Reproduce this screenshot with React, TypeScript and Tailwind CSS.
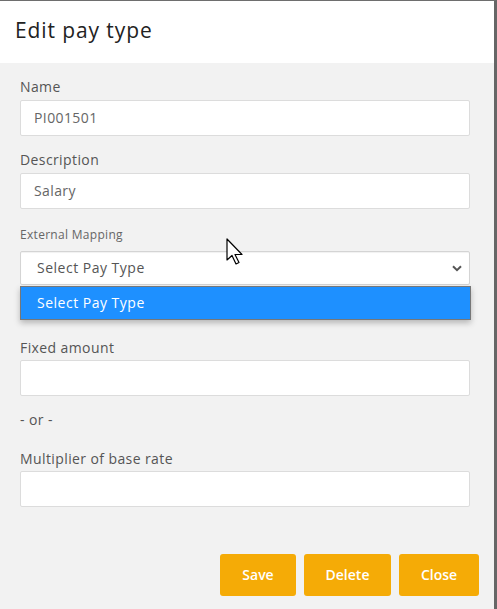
import React from "react";

const font = { fontFamily: "'Open Sans', 'Noto Sans', sans-serif" };

function Label({ children, className = "" }: { children: React.ReactNode; className?: string }) {
  return <div className={"text-[14px] leading-[20px] tracking-[0.4px] text-[#555] " + className}>{children}</div>;
}

function Input({ value, className = "" }: { value?: string; className?: string }) {
  return (
    <div className={"h-[36px] w-full bg-white border border-[#dcdcdc] rounded-[2px] flex items-center pl-[13px] pb-[2px] text-[14px] tracking-[0.4px] text-[#666] " + className}>
      {value}
    </div>
  );
}

export default function App() {
  return (
    <div style={font} className="relative w-[497px] h-[609px] overflow-hidden bg-[#f2f2f2] border-t border-t-[#6e6e6e] border-r-[3px] border-r-[#666]">
      <div className="h-[62px] bg-white flex items-center pl-[15px] pb-[2px]">
        <h1 className="text-[21px] tracking-[0.9px] text-[#222]">Edit pay type</h1>
      </div>
      <div className="pl-[20px] pr-[24px] pt-[14px]">
        <Label className="mb-[3px]">Name</Label>
        <Input value="PI001501" />
        <Label className="mt-[14px] mb-[3px]">Description</Label>
        <Input value="Salary" />
        <div className="mt-[18px] mb-[8px] text-[12px] leading-[16px] tracking-[0.3px] text-[#666]">External Mapping</div>
        <div className="relative">
          <div className="h-[34px] w-full bg-white border border-[#d4d4d4] rounded-[2px] flex items-center justify-between pl-[16px] pr-[7px] pb-[2px] text-[14px] tracking-[0.5px] text-[#555] shadow-[inset_0_1px_1px_rgba(0,0,0,0.06)]">
            <span>Select Pay Type</span>
            <svg width="10" height="7" viewBox="0 0 10 7" className="mt-[2px]">
              <path d="M1 1.2 L5 5.2 L9 1.2" fill="none" stroke="#555" strokeWidth="2" />
            </svg>
          </div>
          <div className="absolute left-0 right-[-1px] top-[35px] h-[34px] bg-[#1e90ff] border border-[#777] flex items-center pl-[16px] pb-[2px] text-[14px] tracking-[0.5px] text-white shadow-[0_3px_6px_rgba(0,0,0,0.25)] z-10">
            Select Pay Type
          </div>
        </div>
        <Label className="mt-[53px] mb-[2px]">Fixed amount</Label>
        <Input />
        <div className="mt-[14px] text-[14px] leading-[20px] tracking-[0.4px] text-[#555]">- or -</div>
        <Label className="mt-[19px] mb-[2px]">Multiplier of base rate</Label>
        <Input />
        <div className="mt-[47px] flex justify-end gap-[8px] mr-[-9px]">
          <button className="w-[76px] h-[42px] bg-[#f5ab06] rounded-[3px] text-white text-[14px] font-semibold pb-[2px]">Save</button>
          <button className="w-[87px] h-[42px] bg-[#f5ab06] rounded-[3px] text-white text-[14px] font-semibold pb-[2px]">Delete</button>
          <button className="w-[80px] h-[42px] bg-[#f5ab06] rounded-[3px] text-white text-[14px] font-semibold pb-[2px]">Close</button>
        </div>
      </div>
      <svg className="absolute left-[226px] top-[237px] z-20" width="20" height="28" viewBox="0 0 20 28">
        <path d="M1 1 L1 22 L6 17.5 L10 26 L13 24.5 L9 16.5 L16 16.5 Z" fill="white" stroke="black" strokeWidth="1.2" strokeLinejoin="round" />
      </svg>
    </div>
  );
}
